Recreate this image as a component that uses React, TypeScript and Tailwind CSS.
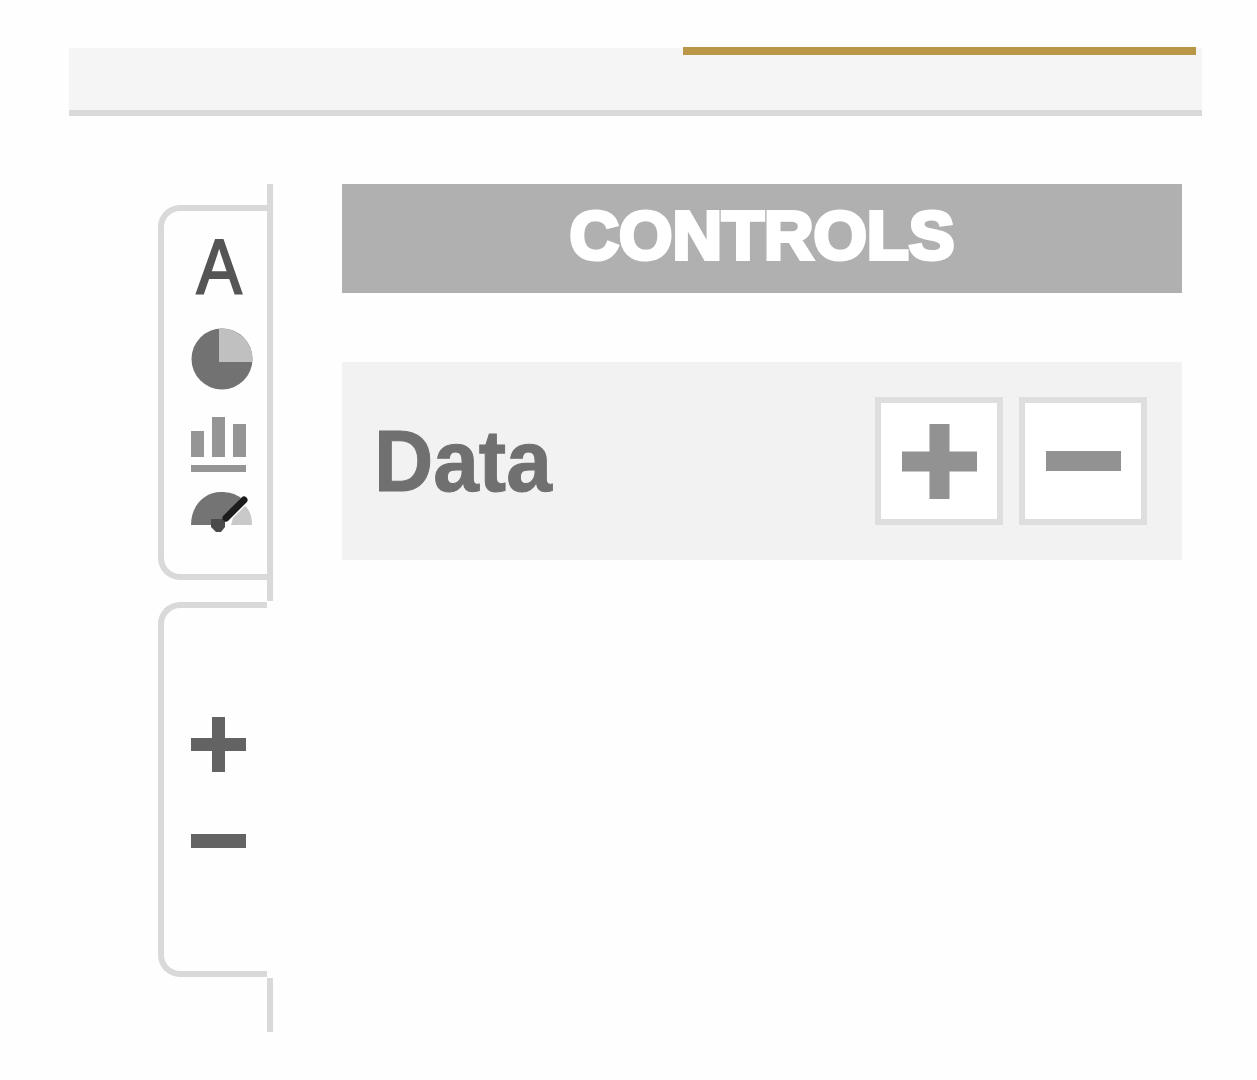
import type { ReactNode } from "react";

function PieIcon() {
  return (
    <svg width="62" height="62" viewBox="0 0 62 62">
      <circle cx="31" cy="31" r="30.5" fill="#727272" />
      <path d="M28 0.7A30.5 30.5 0 0 1 61.3 34H28Z" fill="#c0c0c0" />
    </svg>
  );
}

function BarsIcon() {
  return (
    <svg width="55" height="55" viewBox="0 0 55 55" fill="#959595">
      <rect x="0" y="14" width="13" height="26" />
      <rect x="21" y="0" width="13" height="40" />
      <rect x="42" y="7" width="13" height="33" />
      <rect x="0" y="48" width="55" height="7" />
    </svg>
  );
}

function GaugeIcon() {
  return (
    <svg width="62" height="43" viewBox="0 0 62 43">
      <path d="M0 34C0 15 13 1 30 1C38 1 45 3 50 7L28 34Z" fill="#747474" />
      <path d="M54 15C59 19 61 26 61 34H40L42 27Z" fill="#c9c9c9" />
      <path d="M20 28H34V36L30 41H25L20 36Z" fill="#4b4b4b" />
      <path d="M35 27L53 9" stroke="#1c1c1c" strokeWidth="7" strokeLinecap="round" />
    </svg>
  );
}

function PlusIcon({ size, thickness }: { size: number; thickness: number }) {
  const offset = (size - thickness) / 2;

  return (
    <svg width={size} height={size} fill="currentColor">
      <rect x={offset} y="0" width={thickness} height={size} />
      <rect x="0" y={offset} width={size} height={thickness} />
    </svg>
  );
}

function MinusIcon({ size, thickness }: { size: number; thickness: number }) {
  return (
    <svg width={size} height={thickness} fill="currentColor">
      <rect width={size} height={thickness} />
    </svg>
  );
}

function SquareButton({ label, children }: { label: string; children: ReactNode }) {
  return (
    <button
      type="button"
      aria-label={label}
      className="flex size-32 items-center justify-center border-6 border-[#dedede] bg-white text-[#929292]"
    >
      {children}
    </button>
  );
}

export default function App() {
  return (
    <div className="h-[1080px] w-[1257px] overflow-hidden bg-[#fefefe] pt-[47px] font-['Liberation_Sans',sans-serif]">
      <header className="ml-[69px] flex h-[69px] w-[1133px] justify-end border-b-6 border-[#d9d9d9] bg-linear-to-b from-transparent from-[1px] to-[#f5f5f5] to-[1px] pr-1.5">
        <div className="h-2 w-[513px] bg-[#b99747]" />
      </header>

      <div className="flex pt-[68px] pl-[158px]">
        {/* Side tabs */}
        <nav className="flex w-[115px] flex-col">
          <div className="h-[417px] border-r-6 border-[#d9d9d9] pt-[21px]">
            <div className="flex h-[375px] flex-col items-start rounded-l-[22px] border-y-6 border-l-6 border-[#d9d9d9] pl-[27px]">
              <span className="mt-[28px] flex h-[56px] w-[56px] items-center justify-center text-[78px] leading-none text-[#555] [-webkit-text-stroke:2px_#555]">
                <span className="inline-block scale-x-[0.87]">A</span>
              </span>
              <div className="mt-[33px]">
                <PieIcon />
              </div>
              <div className="mt-[27px]">
                <BarsIcon />
              </div>
              <div className="mt-[19px]">
                <GaugeIcon />
              </div>
            </div>
          </div>

          <div className="mt-px mr-[6px] flex h-[375px] flex-col items-start rounded-l-[22px] border-y-6 border-l-6 border-[#d9d9d9] pt-[109px] pl-[27px] text-[#636363]">
            <PlusIcon size={55} thickness={13} />
            <div className="mt-[62px]">
              <MinusIcon size={55} thickness={14} />
            </div>
          </div>
          <div className="mt-px h-[54px] w-[6px] self-end bg-[#d9d9d9]" />
        </nav>

        <main className="ml-[69px] w-[840px]">
          <h1 className="flex h-[109px] items-center justify-center bg-[#b0b0b0] text-[68.6px] leading-none font-bold text-white [-webkit-text-stroke:4px_white]">
            <span className="relative -top-[2px]">CONTROLS</span>
          </h1>

          <section className="mt-[69px] flex h-[198px] items-center bg-[#f2f2f2] pr-[35px] pl-[32px]">
            <h2 className="flex-1 text-[82px] leading-none font-bold text-[#707070] [-webkit-text-stroke:1px_#707070]">
              <span className="inline-block origin-center scale-y-[1.07]">Data</span>
            </h2>
            <div className="flex gap-4">
              <SquareButton label="Add data">
                <PlusIcon size={75} thickness={20} />
              </SquareButton>
              <SquareButton label="Remove data">
                <MinusIcon size={75} thickness={20} />
              </SquareButton>
            </div>
          </section>
        </main>
      </div>
    </div>
  );
}
